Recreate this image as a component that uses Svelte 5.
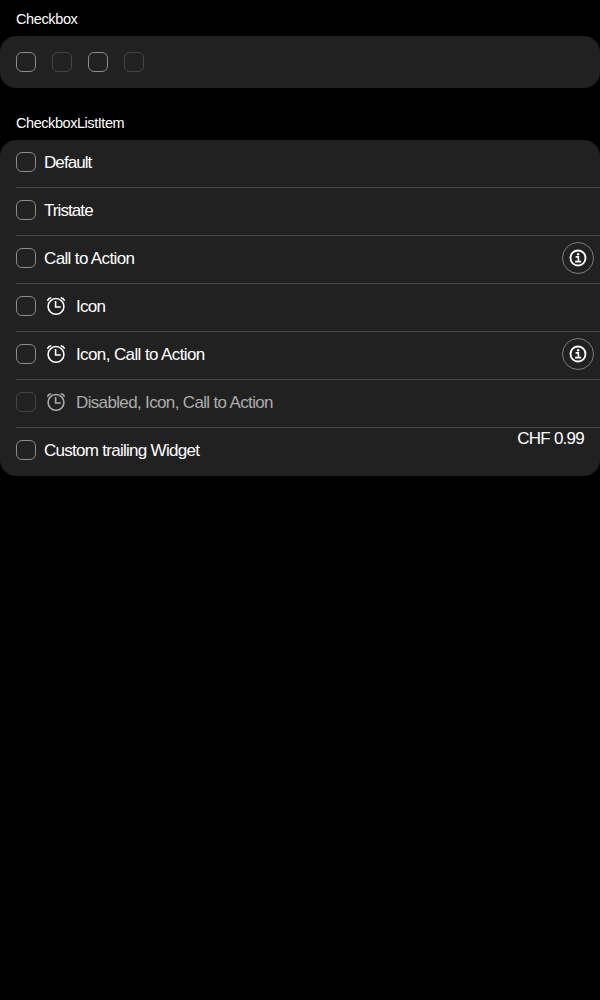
<script>
  const samples = [false, true, false, true];
  const rows = [
    { label: 'Default', spacing: -0.92 },
    { label: 'Tristate', spacing: -0.92 },
    { label: 'Call to Action', info: true, spacing: -0.64 },
    { label: 'Icon', icon: true, spacing: -0.7 },
    { label: 'Icon, Call to Action', icon: true, info: true, spacing: -0.61 },
    { label: 'Disabled, Icon, Call to Action', icon: true, disabled: true, spacing: -0.65 },
    { label: 'Custom trailing Widget', trailing: 'CHF 0.99', spacing: -0.72 }
  ];
</script>

<main>
  <h2>Checkbox</h2>
  <section class="samples">
    {#each samples as disabled}
      <span class="box" class:disabled></span>
    {/each}
  </section>

  <h2 class="second">CheckboxListItem</h2>
  <section class="list">
    {#each rows as row}
      <div class="row" class:disabled={row.disabled}>
        <span class="box" class:disabled={row.disabled}></span>
        {#if row.icon}
          <svg class="clock" width="24" height="24" viewBox="0 0 24 24" fill="none" stroke="currentColor" stroke-width="1.6">
            <circle cx="12" cy="12.4" r="7.9" />
            <path d="M11.6 7v6h5.2M3.4 6.7C4 5.1 5.2 4.1 7.3 3.8M20.6 6.7C20 5.1 18.8 4.1 16.7 3.8" />
          </svg>
        {/if}
        <span class="label" style="letter-spacing: {row.spacing}px">{row.label}</span>
        {#if row.info}
          <span class="info">
            <svg width="20" height="20" viewBox="0 0 20 20" fill="none" stroke="currentColor">
              <circle cx="10" cy="10" r="7.5" stroke-width="1.9" />
              <path d="M7.6 8.9h2.8v4.6M7.1 13.6h6" stroke-width="1.6" />
              <circle cx="10.1" cy="6.2" r="1.2" fill="currentColor" stroke="none" />
            </svg>
          </span>
        {/if}
        {#if row.trailing}
          <span class="trailing">{row.trailing}</span>
        {/if}
      </div>
    {/each}
  </section>
</main>

<style>
  :global(body) {
    background: #000;
  }
  main {
    min-height: 1000px;
    box-sizing: border-box;
    background: #000;
    color: #fff;
    font-family: "Liberation Sans", Arial, sans-serif;
    font-size: 17px;
  }
  h2 {
    margin: 0;
    padding: 11px 16px 9px;
    font-size: 14.5px;
    line-height: 16px;
    font-weight: 400;
    letter-spacing: -0.38px;
  }
  h2.second {
    margin-top: 16px;
    letter-spacing: -0.44px;
  }
  section {
    background: #212121;
    border-radius: 16px;
  }
  .samples {
    display: flex;
    align-items: center;
    gap: 16px;
    height: 52px;
    padding-left: 16px;
  }
  .box {
    box-sizing: border-box;
    flex: none;
    width: 20px;
    height: 20px;
    border: 1px solid #8c8c8c;
    border-radius: 6px;
  }
  .box.disabled {
    border-color: #444;
  }
  .row {
    display: flex;
    align-items: center;
    box-sizing: border-box;
    height: 48px;
    margin-left: 16px;
    padding-bottom: 3px;
    border-bottom: 1px solid #454545;
  }
  .row:last-child {
    border-bottom-color: transparent;
  }
  .row.disabled {
    color: #acacac;
  }
  .clock {
    flex: none;
    margin-left: 8px;
  }
  .label {
    margin-left: 8px;
    line-height: 20px;
    padding-top: 1px;
    white-space: nowrap;
  }
  .info {
    display: flex;
    align-items: center;
    justify-content: center;
    box-sizing: border-box;
    width: 32px;
    height: 32px;
    margin-left: auto;
    margin-right: 6px;
    border: 1px solid #7c7c7c;
    border-radius: 50%;
  }
  .trailing {
    align-self: flex-start;
    margin-left: auto;
    margin-right: 16px;
    line-height: 22px;
    letter-spacing: -0.75px;
  }
</style>
